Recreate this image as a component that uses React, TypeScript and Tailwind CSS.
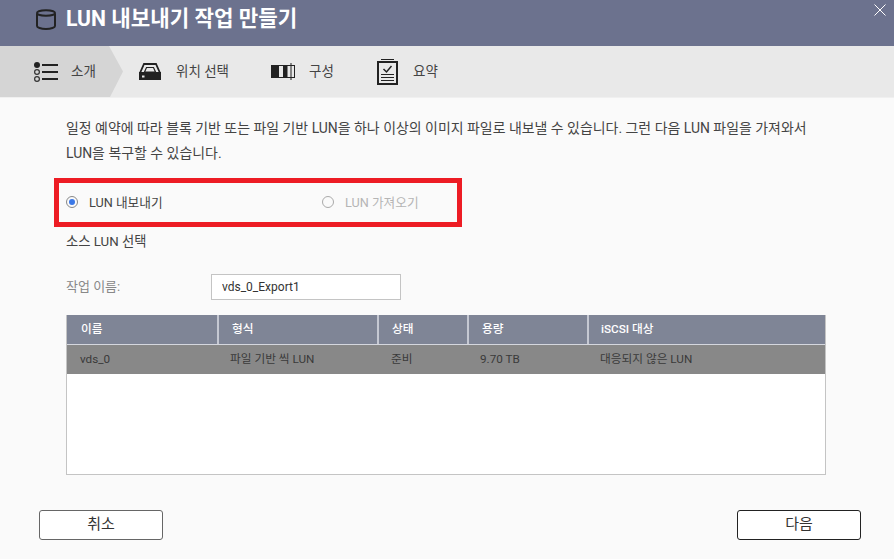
const fontStack = "font-['Roboto','Noto_Sans_CJK_KR',sans-serif]";

function DbIcon() {
  return (
    <svg width="20" height="21" viewBox="0 0 20 21" fill="none" stroke="#222" strokeWidth="2">
      <path d="M1 4.500v12.500c0 1.500 3.800 3 9 3s9-1.500 9-3V4.500" />
      <ellipse cx="10" cy="4" rx="9" ry="2.800" />
    </svg>
  );
}

function ListIcon() {
  return (
    <svg width="24" height="20" viewBox="0 0 24 20" fill="none" stroke="#333">
      <circle cx="3" cy="3" r="3" fill="#222" stroke="none" />
      <circle cx="3" cy="10" r="2.400" strokeWidth="1.200" />
      <circle cx="3" cy="17" r="2.400" strokeWidth="1.200" />
      <path d="M8 3h16M8 10h16M8 17h16" strokeWidth="2" stroke="#222" />
    </svg>
  );
}

function DriveIcon() {
  return (
    <svg width="22" height="17" viewBox="0 0 22 17" fill="none" stroke="#222">
      <path d="M1 10 5 1h12l4 9" strokeWidth="1.800" />
      <path d="M5.500 9l2-4.500h7l2 4.500z" strokeWidth="1.200" />
      <path d="M0 9h22v8H0z" fill="#222" stroke="none" />
      <path d="M3 12.500h2.500v2H3z" fill="#e9e9e9" stroke="none" />
    </svg>
  );
}

function ConfigIcon() {
  return (
    <svg width="24" height="17" viewBox="0 0 24 17">
      <path d="M0 2h8v13H0z" fill="#222" />
      <path d="M12 2h4.500v13H12z" fill="#222" />
      <path d="M8 2h16v1H8zM8 14h16v1H8zM23 2h1v13h-1z" fill="#222" />
      <path d="M19.500 0h1v17h-1z" fill="#222" />
    </svg>
  );
}

function SummaryIcon() {
  return (
    <svg width="21" height="26" viewBox="0 0 21 26" fill="none" stroke="#222">
      <path d="M4 .500h13" strokeWidth="1" />
      <path d="M1 3h19v22H1z" strokeWidth="2" />
      <path d="M6.500 10l3 3 5-6" strokeWidth="1.500" />
      <path d="M4 15.500h13M4 18.500h13M4 21.500h13" strokeWidth="1" />
    </svg>
  );
}

const columns = [
  { label: "이름", value: "vds_0", width: "w-[152px]", headPad: "pl-[14px]", cellPad: "pl-[13px]" },
  { label: "형식", value: "파일 기반 씩 LUN", width: "w-[160px]", headPad: "pl-[13px]", cellPad: "pl-[11px]" },
  { label: "상태", value: "준비", width: "w-[90px]", headPad: "pl-[13px]", cellPad: "pl-[12px]" },
  { label: "용량", value: "9.70 TB", width: "w-[120px]", headPad: "pl-[13px]", cellPad: "pl-[11px]" },
  { label: "iSCSI 대상", value: "대응되지 않은 LUN", width: "flex-1", headPad: "pl-[12px]", cellPad: "pl-[11px]" },
];

export default function App() {
  return (
    <div className={`w-[894px] h-[559px] flex flex-col overflow-hidden bg-[#fafafa] ${fontStack}`}>
      <div className="h-[46px] shrink-0 bg-[#6c728e] flex items-center relative pl-[36px] pb-[8px]">
        <DbIcon />
        <h1 className="ml-[10px] text-[21.2px] font-bold text-white leading-none">LUN 내보내기 작업 만들기</h1>
        <svg className="absolute right-[8px] top-[4px]" width="12" height="12" viewBox="0 0 12 12" stroke="#fff" strokeWidth="1">
          <path d="M.5.5l11 11M11.500.5l-11 11" />
        </svg>
      </div>

      <div className="h-[52px] shrink-0 bg-[#e9e9e9] relative flex items-center text-[13.5px] text-[#444] border-b border-[#f0f0f0]">
        <div className="absolute inset-y-0 left-0 w-[123px] bg-[#d5d5d5] [clip-path:polygon(0_0,109px_0,123px_50%,110px_100%,0_100%)]" />
        <div className="relative flex items-center pl-[34px] w-[139px]">
          <ListIcon />
          <span className="ml-[13px]">소개</span>
        </div>
        <div className="relative flex items-center w-[132px]">
          <DriveIcon />
          <span className="ml-[15px]">위치 선택</span>
        </div>
        <div className="relative flex items-center w-[106px]">
          <ConfigIcon />
          <span className="ml-[14px]">구성</span>
        </div>
        <div className="relative flex items-center">
          <SummaryIcon />
          <span className="ml-[15px]">요약</span>
        </div>
      </div>

      <div className="flex-1 flex flex-col px-[66px] text-[13px] text-[#444]">
        <p className="mt-[18px] leading-[25px] w-[745px] text-[13.95px]">
          일정 예약에 따라 블록 기반 또는 파일 기반 LUN을 하나 이상의 이미지 파일로 내보낼 수 있습니다. 그런 다음 LUN 파일을 가져와서 LUN을 복구할 수 있습니다.
        </p>

        <div className="mt-[12px] -ml-[12px] w-[408px] h-[49px] border-[5px] border-[#ed1c24] flex items-center text-[12.7px]">
          <label className="flex items-center w-[263px] pl-[7px]">
            <span className="w-[12px] h-[12px] rounded-full border border-[#888] flex items-center justify-center">
              <span className="w-[6px] h-[6px] rounded-full bg-[#3b78e7]" />
            </span>
            <span className="ml-[11px]">LUN 내보내기</span>
          </label>
          <label className="flex items-center text-[#b5b5b5]">
            <span className="w-[12px] h-[12px] rounded-full border border-[#aaa]" />
            <span className="ml-[11px]">LUN 가져오기</span>
          </label>
        </div>

        <div className="mt-[5px] leading-[20px] text-[13.3px]">소스 LUN 선택</div>

        <div className="mt-[22px] flex items-center h-[26px]">
          <span className="w-[145px] text-[#888]">작업 이름:</span>
          <input
            readOnly
            value="vds_0_Export1"
            className="w-[190px] h-[26px] border border-[#c4c4c4] bg-white px-[10px] text-[12px] text-[#333] outline-none"
          />
        </div>

        <div className="mt-[15px] w-[760px] h-[160px] border border-[#c4c4c4] border-t-0 bg-white flex flex-col">
          <div className="flex h-[30px] bg-[#7f8596] border-b border-[#d5d7de] text-[11.7px] font-medium text-white">
            {columns.map((c, i) => (
              <div
                key={c.label}
                className={`${c.width} ${c.headPad} flex items-center ${i < columns.length - 1 ? "border-r-2 border-[#c5c8d2]" : ""}`}
              >
                {c.label}
              </div>
            ))}
          </div>
          <div className="flex h-[29px] bg-[#888888] text-[11.7px] text-[#3a3a3a]">
            {columns.map((c) => (
              <div key={c.label} className={`${c.width} ${c.cellPad} flex items-center`}>
                {c.value}
              </div>
            ))}
          </div>
        </div>

        <div className="mt-[35px] -ml-[27px] -mr-[33px] flex justify-between">
          <button className="w-[124px] h-[30px] pb-[2px] bg-white border border-[#666] rounded-[3px] text-[15px] text-[#333]">취소</button>
          <button className="w-[124px] h-[30px] pb-[2px] bg-white border border-[#222] rounded-[3px] text-[15px] text-[#333]">다음</button>
        </div>
      </div>
    </div>
  );
}
